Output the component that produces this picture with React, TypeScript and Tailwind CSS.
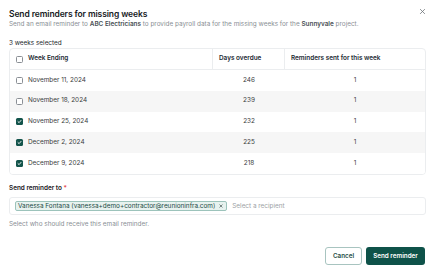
import React from "react";

const rows = [
  { date: "November 11, 2024", days: 246, sent: 1, checked: false },
  { date: "November 18, 2024", days: 239, sent: 1, checked: false },
  { date: "November 25, 2024", days: 232, sent: 1, checked: true },
  { date: "December 2, 2024", days: 225, sent: 1, checked: true },
  { date: "December 9, 2024", days: 218, sent: 1, checked: true },
];

function Box({ checked }: { checked: boolean }) {
  if (checked) {
    return (
      <span className="flex h-[7px] w-[7px] items-center justify-center rounded-[1.5px] bg-[#13544b]">
        <svg width="5" height="5" viewBox="0 0 10 10" fill="none">
          <path d="M2 5.2 L4.2 7.3 L8 2.8" stroke="white" strokeWidth="1.8" strokeLinecap="round" strokeLinejoin="round" />
        </svg>
      </span>
    );
  }
  return <span className="block h-[7px] w-[7px] rounded-[1.5px] border-[0.8px] border-[#8a8f95] bg-white" />;
}

export default function App() {
  return (
    <div
      className="relative h-[276px] w-[435px] bg-white text-[#1f2328]"
      style={{ fontFamily: "Inter, 'Noto Sans', sans-serif" }}
    >
      <div className="absolute right-[9px] top-[8px] text-[#6b7075]">
        <svg width="7" height="7" viewBox="0 0 10 10">
          <path d="M2 2 L8 8 M8 2 L2 8" stroke="currentColor" strokeWidth="1.1" strokeLinecap="round" />
        </svg>
      </div>
      <div className="flex flex-col px-[9px]">
        <div className="mt-[7.5px] text-[8.5px] font-semibold leading-[12px] tracking-[-0.1px] text-[#16191d]">
          Send reminders for missing weeks
        </div>
        <div className="mt-[0.5px] text-[6.4px] leading-[9px] text-[#8a8f95]">
          Send an email reminder to <span className="font-semibold text-[#4a4f55]">ABC Electricians</span> to provide payroll data for the missing weeks for the{" "}
          <span className="font-semibold text-[#4a4f55]">Sunnyvale</span> project.
        </div>
        <div className="mt-[9.5px] text-[6.4px] leading-[9px] text-[#24282d]">3 weeks selected</div>
        <div className="mt-[0.5px] overflow-hidden rounded-[4px] border border-[#ebedef]">
          <div className="flex h-[21px] items-center border-b border-[#ebedef] text-[6.4px] font-semibold text-[#1c2a33]">
            <div className="flex h-full w-[203px] items-center gap-[5px] border-r border-[#ebedef] pl-[6px]">
              <Box checked={false} />
              <span>Week Ending</span>
            </div>
            <div className="flex h-full w-[72px] items-center border-r border-[#ebedef] pl-[6px]">Days overdue</div>
            <div className="flex h-full flex-1 items-center pl-[6px]">Reminders sent for this week</div>
          </div>
          {rows.map((r, i) => (
            <div
              key={r.date}
              className={
                "flex h-[20.8px] items-center text-[6.4px] text-[#3a3d41] " +
                (i % 2 === 1 ? "bg-[#f6f6f6]" : "bg-white")
              }
            >
              <div className="flex w-[203px] items-center gap-[5px] pl-[6px]">
                <Box checked={r.checked} />
                <span>{r.date}</span>
              </div>
              <div className="w-[72px] text-center">{r.days}</div>
              <div className="flex-1 text-center">{r.sent}</div>
            </div>
          ))}
        </div>
        <div className="mt-[9px] text-[6.4px] font-semibold leading-[9px] text-[#1c2024]">
          Send reminder to <span className="text-[#e5484d]">*</span>
        </div>
        <div className="mt-[4.5px] flex h-[18px] items-center gap-[5px] rounded-[3px] border border-[#ebedef] pl-[5px]">
          <div className="flex h-[10px] items-center gap-[4px] rounded-[2px] border-[0.8px] border-[#9cc3bb] bg-[#e7f2ef] pl-[2px] pr-[3px] text-[6.4px] text-[#1b4a43]">
            <span>Vanessa Fontana (vanessa+demo+contractor@reunioninfra.com)</span>
            <svg width="4" height="4" viewBox="0 0 10 10">
              <path d="M2 2 L8 8 M8 2 L2 8" stroke="#3a4a47" strokeWidth="1.6" strokeLinecap="round" />
            </svg>
          </div>
          <span className="text-[6.4px] text-[#9ca1a6]">Select a recipient</span>
        </div>
        <div className="mt-[4.5px] text-[6.4px] leading-[9px] text-[#8a8f95]">Select who should receive this email reminder.</div>
        <div className="mt-[18.5px] flex justify-end gap-[4px] pr-[1px]">
          <button className="flex h-[18px] w-[37px] items-center justify-center rounded-[3px] border border-[#a8c4c0] bg-white text-[6.3px] font-semibold text-[#1e4c45]">
            Cancel
          </button>
          <button className="flex h-[18px] w-[59px] items-center justify-center rounded-[3px] bg-[#0e5249] text-[6.3px] font-semibold text-white">
            Send reminder
          </button>
        </div>
      </div>
    </div>
  );
}
